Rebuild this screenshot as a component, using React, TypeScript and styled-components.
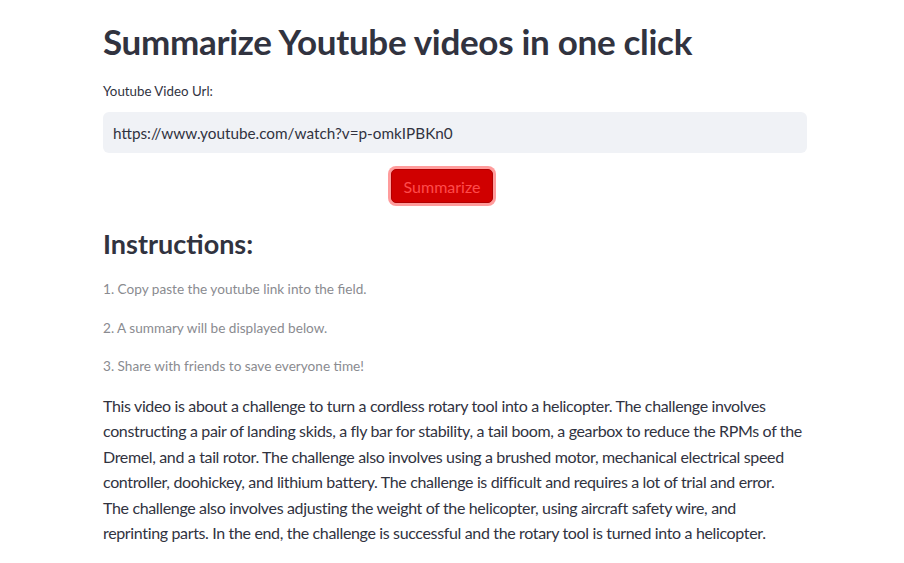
import React from 'react';
import styled, { createGlobalStyle } from 'styled-components';

const GlobalStyle = createGlobalStyle`
  html, body {
    margin: 0;
    padding: 0;
    background: #ffffff;
  }
  body {
    font-family: Lato, "Open Sans", sans-serif;
    color: #31333f;
  }
`;

const Main = styled.div`
  width: 704px;
  margin: 0 auto;
  padding: 18px 0 0 6px;
  display: flex;
  flex-direction: column;
`;

const Title = styled.h1`
  margin: 0;
  font-size: 35px;
  font-weight: 700;
  line-height: 46px;
  letter-spacing: -0.3px;
  color: #31333f;
`;

const Label = styled.label`
  margin-top: 18px;
  font-size: 13.3px;
  line-height: 18px;
  color: #31333f;
`;

const UrlInput = styled.input`
  margin-top: 12px;
  box-sizing: border-box;
  height: 41px;
  width: 100%;
  border: none;
  border-radius: 6px;
  background: #f0f2f6;
  padding: 0 10px;
  font-family: inherit;
  font-size: 15.3px;
  color: #31333f;
  outline: none;
`;

const ButtonRow = styled.div`
  display: flex;
  padding: 16px 0 0 288px;
`;

const Button = styled.button`
  box-sizing: border-box;
  width: 102px;
  height: 34px;
  border: 1px solid #b00000;
  border-radius: 5px;
  background: #d00000;
  box-shadow: 0 0 0 3px rgba(255, 75, 75, 0.55);
  color: #ff4b4b;
  font-family: inherit;
  font-size: 16px;
  cursor: pointer;
`;

const SubTitle = styled.h2`
  margin: 24px 0 0;
  font-size: 27px;
  font-weight: 700;
  line-height: 34px;
  color: #31333f;
`;

const Steps = styled.div`
  margin-top: 19px;
  display: flex;
  flex-direction: column;
  gap: 20.5px;
`;

const Step = styled.p`
  margin: 0;
  font-size: 13.6px;
  line-height: 18px;
  color: #8a8b90;
`;

const Summary = styled.p`
  margin: 18px 0 0;
  max-width: 699.5px;
  font-size: 16px;
  line-height: 25.4px;
  letter-spacing: -0.35px;
  color: #31333f;
`;

const steps = [
  '1. Copy paste the youtube link into the field.',
  '2. A summary will be displayed below.',
  '3. Share with friends to save everyone time!',
];

const summary =
  'This video is about a challenge to turn a cordless rotary tool into a helicopter. The challenge involves constructing a pair of landing skids, a fly bar for stability, a tail boom, a gearbox to reduce the RPMs of the Dremel, and a tail rotor. The challenge also involves using a brushed motor, mechanical electrical speed controller, doohickey, and lithium battery. The challenge is difficult and requires a lot of trial and error. The challenge also involves adjusting the weight of the helicopter, using aircraft safety wire, and reprinting parts. In the end, the challenge is successful and the rotary tool is turned into a helicopter.';

export default function App() {
  return (
    <>
      <GlobalStyle />
      <Main>
        <Title>Summarize Youtube videos in one click</Title>
        <Label>Youtube Video Url:</Label>
        <UrlInput defaultValue="https://www.youtube.com/watch?v=p-omkIPBKn0" />
        <ButtonRow>
          <Button>Summarize</Button>
        </ButtonRow>
        <SubTitle>Instructions:</SubTitle>
        <Steps>
          {steps.map((s) => (
            <Step key={s}>{s}</Step>
          ))}
        </Steps>
        <Summary>{summary}</Summary>
      </Main>
    </>
  );
}
